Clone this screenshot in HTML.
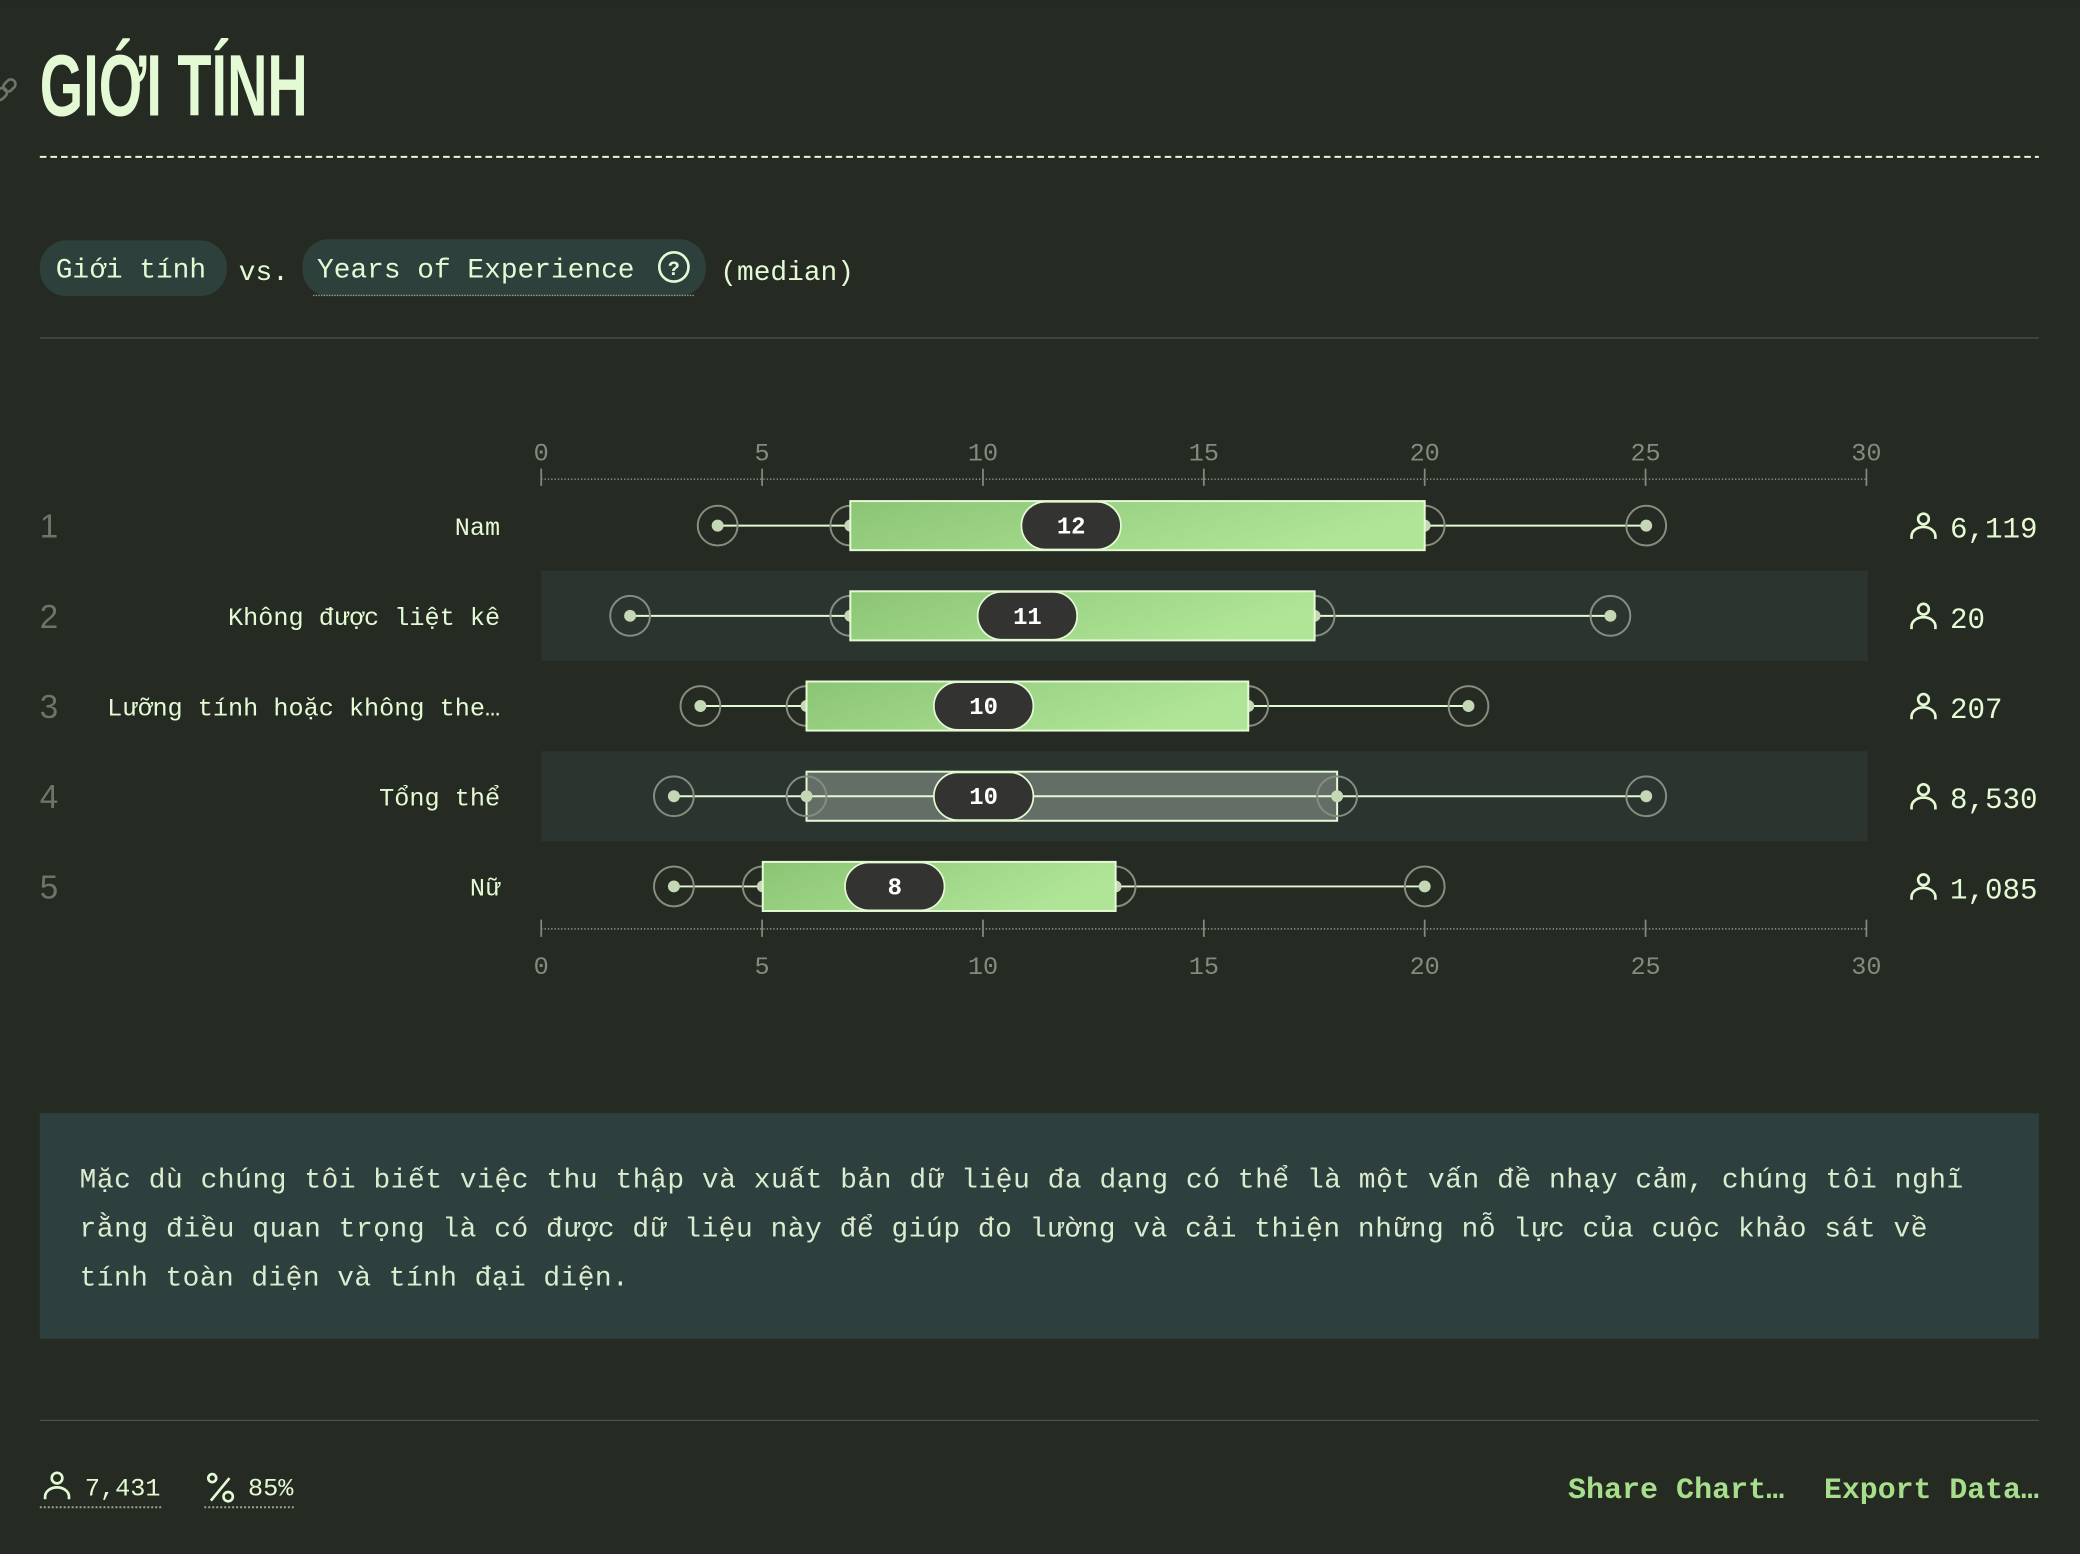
<!DOCTYPE html>
<html><head><meta charset="utf-8"><style>html,body{margin:0;padding:0;background:#252a22;}svg{display:block}</style></head>
<body>
<svg width="2080" height="1554" viewBox="0 0 1568 1171" xmlns="http://www.w3.org/2000/svg" font-family="'Liberation Mono', monospace">
<defs>
<linearGradient id="g" x1="0" y1="0" x2="1" y2="0.3"><stop offset="0" stop-color="#8bc574"/><stop offset="1" stop-color="#b0e598"/></linearGradient>
</defs>
<rect width="1568" height="1171" fill="#252a22"/>
<g stroke="#6e7468" stroke-width="2" fill="none" transform="rotate(-45 6 66)"><rect x="-6" y="62" width="10" height="7" rx="3.5"/><rect x="3" y="62" width="10" height="7" rx="3.5"/></g>
<text x="30" y="87" font-family="'Liberation Sans Narrow','Liberation Sans',sans-serif" font-weight="bold" font-size="66" fill="#e4fad4" textLength="202" lengthAdjust="spacingAndGlyphs">GIỚI TÍNH</text>
<line x1="30" y1="118" x2="1537" y2="118" stroke="#e4fad4" stroke-width="1.5" stroke-dasharray="5 3"/>
<rect x="30" y="181" width="141" height="42" rx="20" fill="#2e403b"/>
<text x="42" y="209" font-size="21" fill="#e4fad4">Giới tính</text>
<text x="180" y="211" font-size="21" fill="#e4fad4">vs.</text>
<rect x="228" y="180" width="304" height="43" rx="20" fill="#2e403b"/>
<line x1="236" y1="222.5" x2="524" y2="222.5" stroke="#9aa392" stroke-dasharray="1 1"/>
<text x="239" y="209" font-size="21" fill="#e4fad4">Years of Experience</text>
<circle cx="508" cy="201" r="11" fill="none" stroke="#e4fad4" stroke-width="2"/>
<text x="508" y="207" font-size="15" font-weight="bold" fill="#e4fad4" text-anchor="middle">?</text>
<text x="543" y="211" font-size="21" fill="#e4fad4">(median)</text>
<line x1="30" y1="254.5" x2="1537" y2="254.5" stroke="#4b5247" stroke-width="1"/>
<g font-size="19" fill="#858a80" text-anchor="middle">
<text x="408" y="347">0</text><text x="574.5" y="347">5</text><text x="741" y="347">10</text><text x="907.5" y="347">15</text><text x="1074" y="347">20</text><text x="1240.5" y="347">25</text><text x="1407" y="347">30</text>
<text x="408" y="734">0</text><text x="574.5" y="734">5</text><text x="741" y="734">10</text><text x="907.5" y="734">15</text><text x="1074" y="734">20</text><text x="1240.5" y="734">25</text><text x="1407" y="734">30</text>
</g>
<g stroke="#858a80" stroke-width="1.3">
<line x1="408" y1="361" x2="1407" y2="361" stroke-dasharray="1 1.5"/>
<line x1="408" y1="700" x2="1407" y2="700" stroke-dasharray="1 1.5"/>
<path d="M408 353v13M574.5 353v13M741 353v13M907.5 353v13M1074 353v13M1240.5 353v13M1407 353v13M408 693v13M574.5 693v13M741 693v13M907.5 693v13M1074 693v13M1240.5 693v13M1407 693v13"/>
</g>
<rect x="408" y="430" width="1000" height="68" fill="#2b342e"/>
<rect x="408" y="566" width="1000" height="68" fill="#2b342e"/>
<g font-size="25" fill="#6e7468" font-family="'Liberation Sans',sans-serif">
<text x="30" y="405">1</text><text x="30" y="473">2</text><text x="30" y="541">3</text><text x="30" y="609">4</text><text x="30" y="677">5</text>
</g>
<g font-size="19" fill="#e4fad4" text-anchor="end">
<text x="377" y="403">Nam</text>
<text x="377" y="471">Không được liệt kê</text>
<text x="377" y="539">Lưỡng tính hoặc không the…</text>
<text x="377" y="607">Tổng thể</text>
<text x="377" y="675">Nữ</text>
</g>
<g>
<line x1="541" y1="396" x2="1241" y2="396" stroke="#e4fad4" stroke-width="1.5"/>
<g fill="none" stroke="#868d80" stroke-width="1.5"><circle cx="541" cy="396" r="15"/><circle cx="641" cy="396" r="15"/><circle cx="1074" cy="396" r="15"/><circle cx="1241" cy="396" r="15"/></g>
<g fill="#c5d8b5"><circle cx="541" cy="396" r="4.5"/><circle cx="641" cy="396" r="4.5"/><circle cx="1074" cy="396" r="4.5"/><circle cx="1241" cy="396" r="4.5"/></g>
<rect x="641" y="377.5" width="433" height="37" fill="url(#g)" stroke="#e4fad4" stroke-width="1.5"/>
<rect x="770" y="378" width="75" height="36" rx="18" fill="#333432" stroke="#e4fad4" stroke-width="1.3"/>
<text x="807.5" y="402" font-size="18" font-weight="bold" fill="#fff" text-anchor="middle">12</text>
</g>
<g>
<line x1="475" y1="464" x2="1214" y2="464" stroke="#e4fad4" stroke-width="1.5"/>
<g fill="none" stroke="#868d80" stroke-width="1.5"><circle cx="475" cy="464" r="15"/><circle cx="641" cy="464" r="15"/><circle cx="991" cy="464" r="15"/><circle cx="1214" cy="464" r="15"/></g>
<g fill="#c5d8b5"><circle cx="475" cy="464" r="4.5"/><circle cx="641" cy="464" r="4.5"/><circle cx="991" cy="464" r="4.5"/><circle cx="1214" cy="464" r="4.5"/></g>
<rect x="641" y="445.5" width="350" height="37" fill="url(#g)" stroke="#e4fad4" stroke-width="1.5"/>
<rect x="737" y="446" width="75" height="36" rx="18" fill="#333432" stroke="#e4fad4" stroke-width="1.3"/>
<text x="774.5" y="470" font-size="18" font-weight="bold" fill="#fff" text-anchor="middle">11</text>
</g>
<g>
<line x1="528" y1="532" x2="1107" y2="532" stroke="#e4fad4" stroke-width="1.5"/>
<g fill="none" stroke="#868d80" stroke-width="1.5"><circle cx="528" cy="532" r="15"/><circle cx="608" cy="532" r="15"/><circle cx="941" cy="532" r="15"/><circle cx="1107" cy="532" r="15"/></g>
<g fill="#c5d8b5"><circle cx="528" cy="532" r="4.5"/><circle cx="608" cy="532" r="4.5"/><circle cx="941" cy="532" r="4.5"/><circle cx="1107" cy="532" r="4.5"/></g>
<rect x="608" y="513.5" width="333" height="37" fill="url(#g)" stroke="#e4fad4" stroke-width="1.5"/>
<rect x="704" y="514" width="75" height="36" rx="18" fill="#333432" stroke="#e4fad4" stroke-width="1.3"/>
<text x="741.5" y="538" font-size="18" font-weight="bold" fill="#fff" text-anchor="middle">10</text>
</g>
<g>
<rect x="608" y="581.5" width="400" height="37" fill="#646e66" stroke="#e4fad4" stroke-width="1.5"/>
<line x1="508" y1="600" x2="1241" y2="600" stroke="#e4fad4" stroke-width="1.5"/>
<g fill="none" stroke="#868d80" stroke-width="1.5"><circle cx="508" cy="600" r="15"/><circle cx="608" cy="600" r="15"/><circle cx="1008" cy="600" r="15"/><circle cx="1241" cy="600" r="15"/></g>
<g fill="#c5d8b5"><circle cx="508" cy="600" r="4.5"/><circle cx="608" cy="600" r="4.5"/><circle cx="1008" cy="600" r="4.5"/><circle cx="1241" cy="600" r="4.5"/></g>
<rect x="704" y="582" width="75" height="36" rx="18" fill="#333432" stroke="#e4fad4" stroke-width="1.3"/>
<text x="741.5" y="606" font-size="18" font-weight="bold" fill="#fff" text-anchor="middle">10</text>
</g>
<g>
<line x1="508" y1="668" x2="1074" y2="668" stroke="#e4fad4" stroke-width="1.5"/>
<g fill="none" stroke="#868d80" stroke-width="1.5"><circle cx="508" cy="668" r="15"/><circle cx="575" cy="668" r="15"/><circle cx="841" cy="668" r="15"/><circle cx="1074" cy="668" r="15"/></g>
<g fill="#c5d8b5"><circle cx="508" cy="668" r="4.5"/><circle cx="575" cy="668" r="4.5"/><circle cx="841" cy="668" r="4.5"/><circle cx="1074" cy="668" r="4.5"/></g>
<rect x="575" y="649.5" width="266" height="37" fill="url(#g)" stroke="#e4fad4" stroke-width="1.5"/>
<rect x="637" y="650" width="75" height="36" rx="18" fill="#333432" stroke="#e4fad4" stroke-width="1.3"/>
<text x="674.5" y="674" font-size="18" font-weight="bold" fill="#fff" text-anchor="middle">8</text>
</g>
<g fill="none" stroke="#e4fad4" stroke-width="2">
<circle cx="1450" cy="391" r="4"/><path d="M1441 406v-2a9 7 0 0 1 18 0v2"/>
<circle cx="1450" cy="459" r="4"/><path d="M1441 474v-2a9 7 0 0 1 18 0v2"/>
<circle cx="1450" cy="527" r="4"/><path d="M1441 542v-2a9 7 0 0 1 18 0v2"/>
<circle cx="1450" cy="595" r="4"/><path d="M1441 610v-2a9 7 0 0 1 18 0v2"/>
<circle cx="1450" cy="663" r="4"/><path d="M1441 678v-2a9 7 0 0 1 18 0v2"/>
</g>
<g font-size="22" fill="#e4fad4">
<text x="1470" y="405">6,119</text><text x="1470" y="473">20</text><text x="1470" y="541">207</text><text x="1470" y="609">8,530</text><text x="1470" y="677">1,085</text>
</g>
<rect x="30" y="839" width="1507" height="170" fill="#2e403d"/>
<g font-size="21" fill="#dcecd0">
<text x="60" y="895" textLength="1420" lengthAdjust="spacing">Mặc dù chúng tôi biết việc thu thập và xuất bản dữ liệu đa dạng có thể là một vấn đề nhạy cảm, chúng tôi nghĩ</text>
<text x="60" y="932" textLength="1393" lengthAdjust="spacing">rằng điều quan trọng là có được dữ liệu này để giúp đo lường và cải thiện những nỗ lực của cuộc khảo sát về</text>
<text x="60" y="969" textLength="414" lengthAdjust="spacing">tính toàn diện và tính đại diện.</text>
</g>
<line x1="30" y1="1070.5" x2="1537" y2="1070.5" stroke="#4b5247"/>
<g fill="none" stroke="#e4fad4" stroke-width="2">
<circle cx="43" cy="1114" r="4"/><path d="M34 1130v-2a9 7 0 0 1 18 0v2"/>
<path d="M159 1131l14-17"/><circle cx="160" cy="1114" r="3"/><circle cx="172" cy="1128" r="3.5"/>
</g>
<text x="64" y="1127" font-size="19" fill="#e4fad4">7,431</text>
<text x="187" y="1127" font-size="19" fill="#e4fad4">85%</text>
<g stroke="#9aa392" stroke-width="1.5" stroke-dasharray="1.5 1.5"><line x1="30" y1="1136" x2="123" y2="1136"/><line x1="154" y1="1136" x2="223" y2="1136"/></g>
<g font-size="22" font-weight="bold" fill="#a6de8c">
<text x="1182" y="1129" textLength="163" lengthAdjust="spacingAndGlyphs">Share Chart…</text>
<text x="1375" y="1129" textLength="162" lengthAdjust="spacingAndGlyphs">Export Data…</text>
</g>
</svg>
</body></html>
